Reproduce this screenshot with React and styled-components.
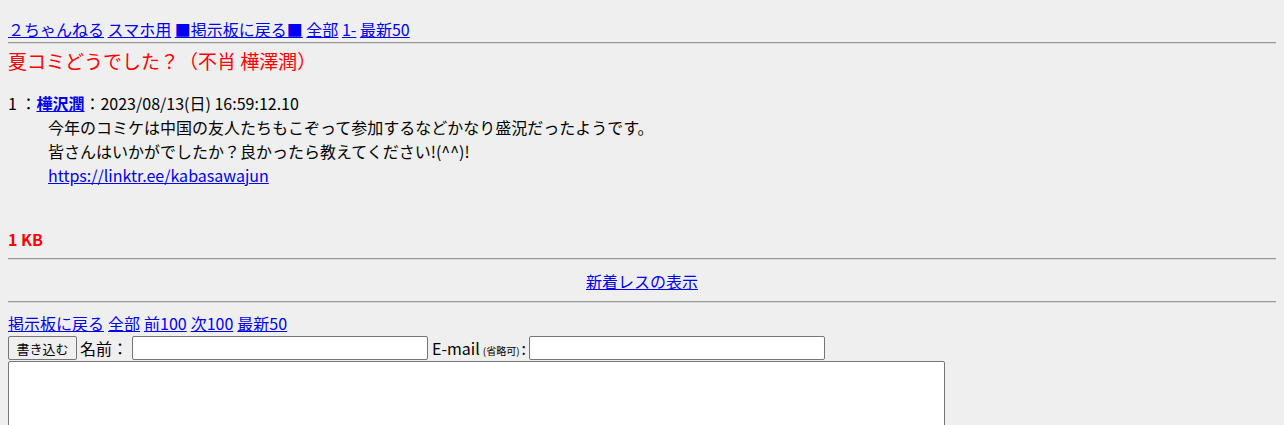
import styled, { createGlobalStyle } from "styled-components";

const GlobalStyle = createGlobalStyle`
  body {
    margin: 8px;
    background: #efefef;
    color: #000;
    font-family: "Noto Sans CJK JP", "Noto Sans", sans-serif;
    font-size: 16px;
  }
  a {
    color: #0000ee;
  }
`;

const Page = styled.div`
  display: flex;
  flex-direction: column;
`;

const Nav = styled.div`
  padding-top: 9px;
  padding-bottom: 1px;
  line-height: 24px;
  display: flex;
  gap: 3.6px;
`;

const Rule = styled.hr`
  margin: ${({ space }) => space || "0"};
  border: none;
  border-top: 1px solid #9a9a9a;
  border-bottom: 1px solid #d8d8d8;
  height: 0;
`;

const Title = styled.h1`
  margin: 4px 0 0;
  color: #ff0000;
  font-size: 19px;
  font-weight: normal;
  line-height: 26px;
`;

const Thread = styled.dl`
  margin: 17px 0 0;
  line-height: 24px;
`;

const PostHead = styled.dt`
  margin: 0;
  b a {
    font-weight: bold;
  }
`;

const PostBody = styled.dd`
  margin: 0 0 0 40px;
`;

const Size = styled.div`
  margin-top: 40px;
  color: #ff0000;
  font-weight: bold;
  line-height: 24px;
`;

const CenterLink = styled.div`
  text-align: center;
  line-height: 24px;
  padding: 9px 0 8px;
`;

const LinkRow = styled.div`
  display: flex;
  gap: 4px;
  line-height: 24px;
  margin-top: 8px;
`;

const Form = styled.form`
  display: flex;
  flex-direction: column;
`;

const FormRow = styled.div`
  display: flex;
  align-items: center;
  height: 24px;
  margin: 1px 0 1px;
`;

const Button = styled.button`
  font-family: "Noto Sans CJK JP", sans-serif;
  font-size: 13px;
  height: 24px;
  padding: 0 7.5px;
  background: #efefef;
  border: 1px solid #767676;
  border-radius: 2px;
  color: #000;
  margin-right: 3px;
`;

const Label = styled.span`
  margin-right: ${({ gap }) => gap || "3px"};
  small {
    font-size: 10px;
    margin: 0 2px 0 3px;
  }
`;

const TextInput = styled.input`
  width: 296px;
  height: 24px;
  box-sizing: border-box;
  border: 1px solid #767676;
  border-radius: 2px;
  background: #fff;
  margin-right: 4px;
`;

const TextArea = styled.textarea`
  width: 937px;
  height: 100px;
  box-sizing: border-box;
  border: 1px solid #767676;
  border-radius: 2px;
  background: #fff;
  resize: none;
`;

export default function App() {
  return (
    <Page>
      <GlobalStyle />
      <Nav>
        <a href="#">２ちゃんねる</a>
        <a href="#">スマホ用</a>
        <a href="#">■掲示板に戻る■</a>
        <a href="#">全部</a>
        <a href="#">1-</a>
        <a href="#">最新50</a>
      </Nav>
      <Rule />
      <Title>夏コミどうでした？（不肖 樺澤潤）</Title>
      <Thread>
        <PostHead>
          1 ：<b><a href="#">樺沢潤</a></b>：2023/08/13(日) 16:59:12.10
        </PostHead>
        <PostBody>
          今年のコミケは中国の友人たちもこぞって参加するなどかなり盛況だったようです。
          <br />
          皆さんはいかがでしたか？良かったら教えてください!(^^)!
          <br />
          <a href="#">https://linktr.ee/kabasawajun</a>
        </PostBody>
      </Thread>
      <Size>1 KB</Size>
      <Rule space="7px 0 0" />
      <CenterLink>
        <a href="#">新着レスの表示</a>
      </CenterLink>
      <Rule />
      <LinkRow>
        <a href="#">掲示板に戻る</a>
        <a href="#">全部</a>
        <a href="#">前100</a>
        <a href="#">次100</a>
        <a href="#">最新50</a>
      </LinkRow>
      <Form>
        <FormRow>
          <Button type="button">書き込む</Button>
          <Label gap="4px">名前：</Label>
          <TextInput />
          <Label gap="3px">
            E-mail<small>(省略可)</small>:
          </Label>
          <TextInput />
        </FormRow>
        <TextArea />
      </Form>
    </Page>
  );
}
